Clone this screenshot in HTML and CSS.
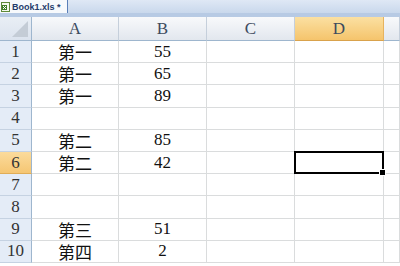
FILE: index.html
```html
<!DOCTYPE html>
<html>
  <head>
    <title>Book1.xls</title>
    <link rel="stylesheet" href="styles.css">
  </head>
  <body>
    <div class="tabbar">
      <div class="tab">
        <svg class="xl-icon" width="9" height="10" viewBox="0 0 9 10">
          <rect x="0.5" y="0.5" width="8" height="9" fill="#f4f8ee" stroke="#5e8a3a"/>
          <rect x="1" y="3" width="5" height="5" fill="#3f7d2a"/>
          <path d="M2 4 L5 7 M5 4 L2 7" stroke="#fff" stroke-width="1"/>
        </svg>
        <span>Book1.xls *</span>
      </div>
    </div>

    <div class="sheet">
      <div class="corner"><span class="tri"></span></div>
      <div class="colhead">A</div>
      <div class="colhead">B</div>
      <div class="colhead">C</div>
      <div class="colhead active">D</div>
      <div class="colhead"></div>

      <div class="rowhead">1</div><div class="cell">第一</div><div class="cell">55</div><div class="cell"></div><div class="cell"></div><div class="cell"></div>
      <div class="rowhead">2</div><div class="cell">第一</div><div class="cell">65</div><div class="cell"></div><div class="cell"></div><div class="cell"></div>
      <div class="rowhead">3</div><div class="cell">第一</div><div class="cell">89</div><div class="cell"></div><div class="cell"></div><div class="cell"></div>
      <div class="rowhead">4</div><div class="cell"></div><div class="cell"></div><div class="cell"></div><div class="cell"></div><div class="cell"></div>
      <div class="rowhead">5</div><div class="cell">第二</div><div class="cell">85</div><div class="cell"></div><div class="cell"></div><div class="cell"></div>
      <div class="rowhead active">6</div><div class="cell">第二</div><div class="cell">42</div><div class="cell"></div><div class="cell selected"><span class="handle"></span></div><div class="cell"></div>
      <div class="rowhead">7</div><div class="cell"></div><div class="cell"></div><div class="cell"></div><div class="cell"></div><div class="cell"></div>
      <div class="rowhead">8</div><div class="cell"></div><div class="cell"></div><div class="cell"></div><div class="cell"></div><div class="cell"></div>
      <div class="rowhead">9</div><div class="cell">第三</div><div class="cell">51</div><div class="cell"></div><div class="cell"></div><div class="cell"></div>
      <div class="rowhead">10</div><div class="cell">第四</div><div class="cell">2</div><div class="cell"></div><div class="cell"></div><div class="cell"></div>
    </div>
  </body>
</html>
```

FILE: styles.css
```css
body {
  margin: 0;
  width: 400px;
  height: 266px;
  overflow: hidden;
  background-color: #fff;
  font-family: "Liberation Serif", "Noto Sans CJK SC", serif;
}

/* workbook tab strip */
.tabbar {
  height: 13px;
  background: linear-gradient(#dfe8f5, #c9d8ec);
  border-bottom: 4px solid #b7cae4;
  display: flex;
}

.tab {
  width: 66px;
  display: flex;
  align-items: center;
  gap: 2px;
  padding-left: 1px;
  background-color: #f7f9fc;
  border-right: 1px solid #5b7fb8;
}

.tab span {
  font-family: "Liberation Sans", Arial, sans-serif;
  font-size: 9px;
  font-weight: bold;
  color: #243b6b;
  white-space: nowrap;
}

/* grid */
.sheet {
  display: grid;
  grid-template-columns: 32px 87px 88px 88px 89px 16px;
  grid-template-rows: 24px repeat(10, 22.2px);
}

.corner {
  position: relative;
  background: linear-gradient(#e9eef5, #dbe3ee);
  border-right: 1px solid #9eb6ce;
  border-bottom: 1px solid #9eb6ce;
}

.tri {
  position: absolute;
  right: 3px;
  bottom: 3px;
  width: 0;
  height: 0;
  border-left: 16px solid transparent;
  border-bottom: 16px solid #c4ccd6;
}

.colhead {
  display: flex;
  align-items: center;
  justify-content: center;
  background: linear-gradient(#f8f9fb, #e2e7ee);
  border-right: 1px solid #c5cfdb;
  border-bottom: 1px solid #9eb6ce;
  font-size: 17px;
  color: #3d4b5e;
}

.colhead.active {
  background: linear-gradient(#fbe0a2, #f5c46c);
  border-right-color: #e6b35e;
  border-bottom-color: #d9a24c;
}

.rowhead {
  display: flex;
  align-items: center;
  justify-content: center;
  background-color: #e4ecf7;
  border-right: 1px solid #9eb6ce;
  border-bottom: 1px solid #c5d2e2;
  font-size: 17px;
  color: #333;
}

.rowhead.active {
  background: linear-gradient(#fbdb9c, #f5c673);
  border-bottom-color: #e0ad57;
}

.cell {
  display: flex;
  align-items: center;
  justify-content: center;
  border-right: 1px solid #dadcdd;
  border-bottom: 1px solid #dadcdd;
  font-size: 17px;
  color: #111;
}

.cell.selected {
  position: relative;
  border: 2px solid #000;
  margin: -1px 0 0 -1px;
}

.handle {
  position: absolute;
  right: -4px;
  bottom: -4px;
  width: 5px;
  height: 5px;
  background-color: #000;
  border: 1px solid #fff;
}
```
